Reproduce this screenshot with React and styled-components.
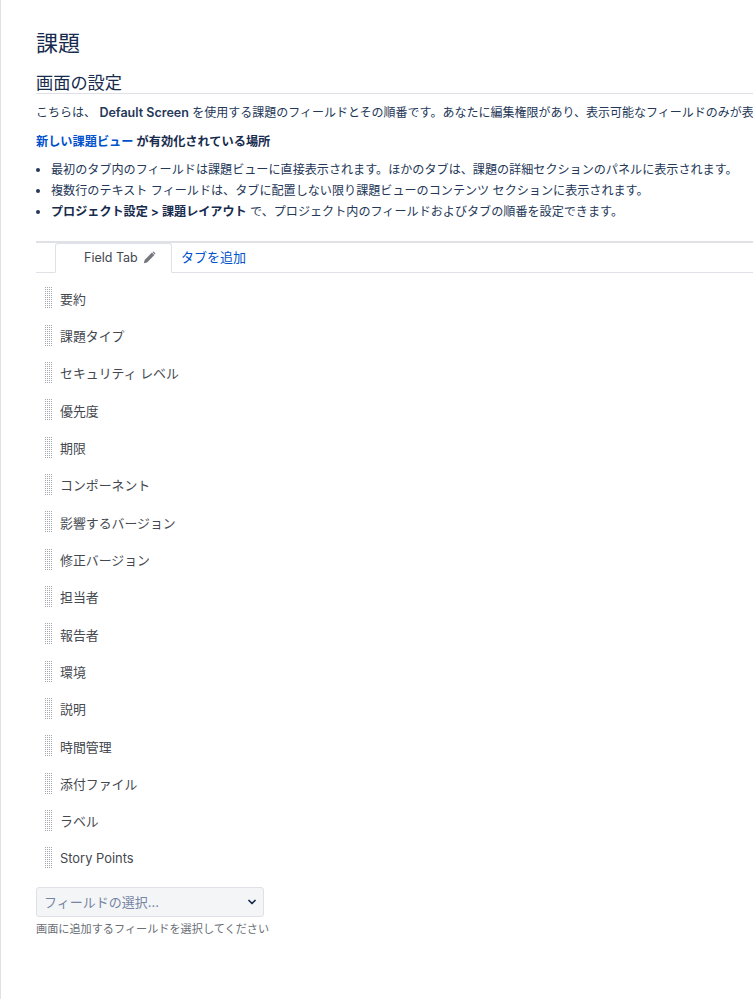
import React from 'react';
import styled, { createGlobalStyle } from 'styled-components';
import { ChevronDown } from 'lucide-react';

const GlobalStyle = createGlobalStyle`
    html, body {
        margin: 0;
        padding: 0;
        background: #fff;
    }
    body {
        font-family: Inter, "Noto Sans CJK JP", sans-serif;
        color: #172b4d;
    }
`;

const fields = [
    '要約',
    '課題タイプ',
    'セキュリティ レベル',
    '優先度',
    '期限',
    'コンポーネント',
    '影響するバージョン',
    '修正バージョン',
    '担当者',
    '報告者',
    '環境',
    '説明',
    '時間管理',
    '添付ファイル',
    'ラベル',
    'Story Points',
];

function PencilIcon() {
    return (
        <svg width="13" height="13" viewBox="0 0 13 13" aria-hidden="true">
            <path d="M0.8 12.2 L1.6 8.9 L8.9 1.6 L11.4 4.1 L4.1 11.4 Z" fill="#74777d" />
            <path d="M9.7 0.9 Q10.4 0.3 11.1 0.9 L12.1 1.9 Q12.7 2.6 12.1 3.3 L11.9 3.5 L9.4 1.1 Z" fill="#74777d" />
        </svg>
    );
}

function App() {
    return (
        <Page>
            <GlobalStyle />
            <Title>課題</Title>
            <SectionTitle>画面の設定</SectionTitle>
            <Intro>
                こちらは、 <strong>Default Screen</strong> を使用する課題のフィールドとその順番です。あなたに編集権限があり、表示可能なフィールドのみが表示されます。
            </Intro>
            <Notice>
                <a href="#new">新しい課題ビュー</a> が有効化されている場所
            </Notice>
            <Notes>
                <li>最初のタブ内のフィールドは課題ビューに直接表示されます。ほかのタブは、課題の詳細セクションのパネルに表示されます。</li>
                <li>複数行のテキスト フィールドは、タブに配置しない限り課題ビューのコンテンツ セクションに表示されます。</li>
                <li><strong>プロジェクト設定 &gt; 課題レイアウト</strong> で、プロジェクト内のフィールドおよびタブの順番を設定できます。</li>
            </Notes>
            <TabBar>
                <Tab>
                    Field Tab <PencilIcon />
                </Tab>
                <AddTab href="#add">タブを追加</AddTab>
            </TabBar>
            <FieldList>
                {fields.map((field) => (
                    <FieldRow key={field}>
                        <Grip />
                        <span>{field}</span>
                    </FieldRow>
                ))}
            </FieldList>
            <SelectWrap>
                <FieldSelect defaultValue="">
                    <option value="">フィールドの選択...</option>
                </FieldSelect>
                <SelectArrow>
                    <ChevronDown size={12} strokeWidth={3.5} />
                </SelectArrow>
            </SelectWrap>
            <Hint>画面に追加するフィールドを選択してください</Hint>
        </Page>
    );
}

const Page = styled.div`
    width: 753px;
    height: 999px;
    box-sizing: border-box;
    padding: 28px 0 0 35px;
    border-left: 1px solid #dfe1e6;
    overflow: hidden;
    white-space: nowrap;
`;

const Title = styled.h1`
    margin: 0;
    font-size: 22px;
    line-height: 30px;
    font-weight: 400;
    color: #172b4d;
`;

const SectionTitle = styled.h2`
    margin: 11px 0 0;
    height: 24px;
    font-size: 17.2px;
    line-height: 27px;
    font-weight: 400;
    color: #172b4d;
    border-bottom: 1px solid #dfe1e6;
`;

const Intro = styled.p`
    margin: 10px 0 0;
    font-size: 12px;
    line-height: 18px;
    color: #253858;

    strong {
        font-weight: 600;
        font-size: 12.5px;
    }
`;

const Notice = styled.p`
    margin: 11px 0 0;
    font-size: 12.2px;
    line-height: 18px;
    font-weight: 600;

    a {
        color: #0052cc;
        text-decoration: none;
    }
`;

const Notes = styled.ul`
    margin: 8px 0 0;
    padding: 0 0 0 15px;
    font-size: 12.1px;
    line-height: 21px;
    color: #253858;

    strong {
        font-weight: 600;
        color: #172b4d;
    }
`;

const TabBar = styled.div`
    margin-top: 19px;
    height: 29px;
    padding-left: 19px;
    display: flex;
    align-items: flex-end;
    border-top: 2px solid #dfe1e6;
    border-bottom: 1px solid #dfe1e6;
    box-sizing: content-box;
`;

const Tab = styled.div`
    box-sizing: border-box;
    width: 117px;
    height: 30px;
    margin-bottom: -1px;
    padding: 0 0 2px 28px;
    display: flex;
    align-items: center;
    gap: 5px;
    font-size: 12.5px;
    color: #44484f;
    background: #fff;
    border: 1px solid #dfe1e6;
    border-bottom-color: #fff;
    border-radius: 3px 3px 0 0;
`;

const AddTab = styled.a`
    margin-left: 9px;
    height: 29px;
    line-height: 29px;
    font-size: 13px;
    color: #0052cc;
    text-decoration: none;
`;

const FieldList = styled.div`
    margin-top: 6.5px;
    display: flex;
    flex-direction: column;
`;

const FieldRow = styled.div`
    height: 37.35px;
    padding-left: 9px;
    display: flex;
    align-items: center;
    gap: 7px;
    font-size: 12.9px;
    color: #44484f;
`;

const Grip = styled.span`
    width: 8px;
    height: 22px;
    background-image: radial-gradient(circle at 0.5px 0.5px, #a3a7ad 0.5px, transparent 0.6px);
    background-size: 2px 2px;
`;

const SelectWrap = styled.div`
    position: relative;
    width: 228px;
    margin-top: 9.5px;
`;

const FieldSelect = styled.select`
    display: block;
    width: 100%;
    height: 30px;
    padding: 0 24px 0 7px;
    appearance: none;
    font-family: inherit;
    font-size: 13px;
    color: #7486a3;
    background: #f4f5f7;
    border: 1px solid #dfe1e6;
    border-radius: 3px;
`;

const SelectArrow = styled.span`
    position: absolute;
    top: 9px;
    right: 6px;
    color: #172b4d;
    pointer-events: none;
    line-height: 0;
`;

const Hint = styled.div`
    margin-top: 4px;
    font-size: 11.15px;
    line-height: 16px;
    color: #6b6f76;
`;

export default App;
